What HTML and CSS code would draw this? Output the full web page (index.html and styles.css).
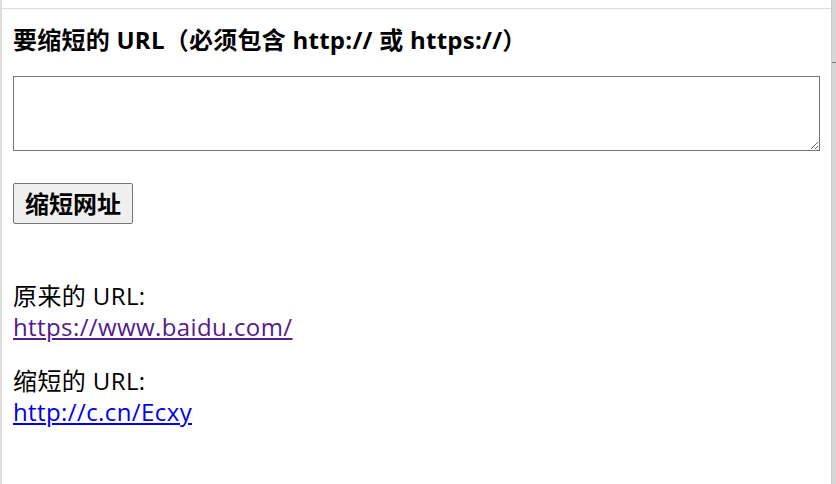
FILE: index.html
```html
<!DOCTYPE html>
<html lang="zh-CN">
<head>
<meta charset="utf-8">
<title>缩短网址</title>
<link rel="stylesheet" href="styles.css">
</head>
<body>
<div class="window">
  <main class="frame">
    <div class="page">
      <h3 class="title">要缩短的 URL（必须包含 http:// 或 https://）</h3>
      <textarea class="url-input"></textarea>
      <button class="submit" type="button">缩短网址</button>
      <div class="result">
        <p class="row">原来的 URL:<br><a class="link visited" href="#orig">https://www.baidu.com/</a></p>
        <p class="row">缩短的 URL:<br><a class="link" href="#short">http://c.cn/Ecxy</a></p>
      </div>
    </div>
  </main>
  <div class="scrollbar"><div class="tick"></div></div>
</div>
</body>
</html>
```
FILE: styles.css
```css
html, body {
  margin: 0;
  padding: 0;
  height: 100%;
  background: #fff;
}
body {
  font-family: "Open Sans", "Noto Sans CJK SC", sans-serif;
  color: #000;
}
.window {
  display: flex;
  height: 484px;
  overflow: hidden;
}
.frame {
  flex: 1;
  border-left: 2px solid #dcdcdc;
  padding-top: 8px;
}
.page {
  border-top: 1px solid #dcdcdc;
  padding: 0 11px;
}
.title {
  margin: 15px 0 0;
  font-size: 24px;
  line-height: 32px;
  font-weight: bold;
  letter-spacing: 0.25px;
}
.url-input {
  display: block;
  box-sizing: border-box;
  width: 807px;
  height: 75px;
  margin-top: 20px;
  border: 1px solid #767676;
  border-radius: 0;
  padding: 2px;
  font: 16px "Open Sans", sans-serif;
  resize: both;
}
.submit {
  display: block;
  margin-top: 32px;
  box-sizing: border-box;
  width: 120px;
  height: 41px;
  padding: 0 6px;
  background: #efefef;
  border: 1px solid #767676;
  border-radius: 2px;
  font-family: "Open Sans", "Noto Sans CJK SC", sans-serif;
  font-size: 24px;
  line-height: 30px;
  font-weight: bold;
  color: #000;
}
.result {
  margin-top: 56px;
}
.row {
  margin: 0 0 23px;
  font-size: 24px;
  line-height: 31px;
  letter-spacing: 0.4px;
}
.link {
  color: #0000ee;
  text-decoration: underline;
}
.link.visited {
  color: #551a8b;
}
.scrollbar {
  position: relative;
  width: 5px;
  background: #d6d6d6;
  border-left: 1px solid #c8c8c8;
}
.tick {
  position: absolute;
  top: 62px;
  left: 0;
  width: 5px;
  height: 1px;
  background: #7a7a7a;
}
```
